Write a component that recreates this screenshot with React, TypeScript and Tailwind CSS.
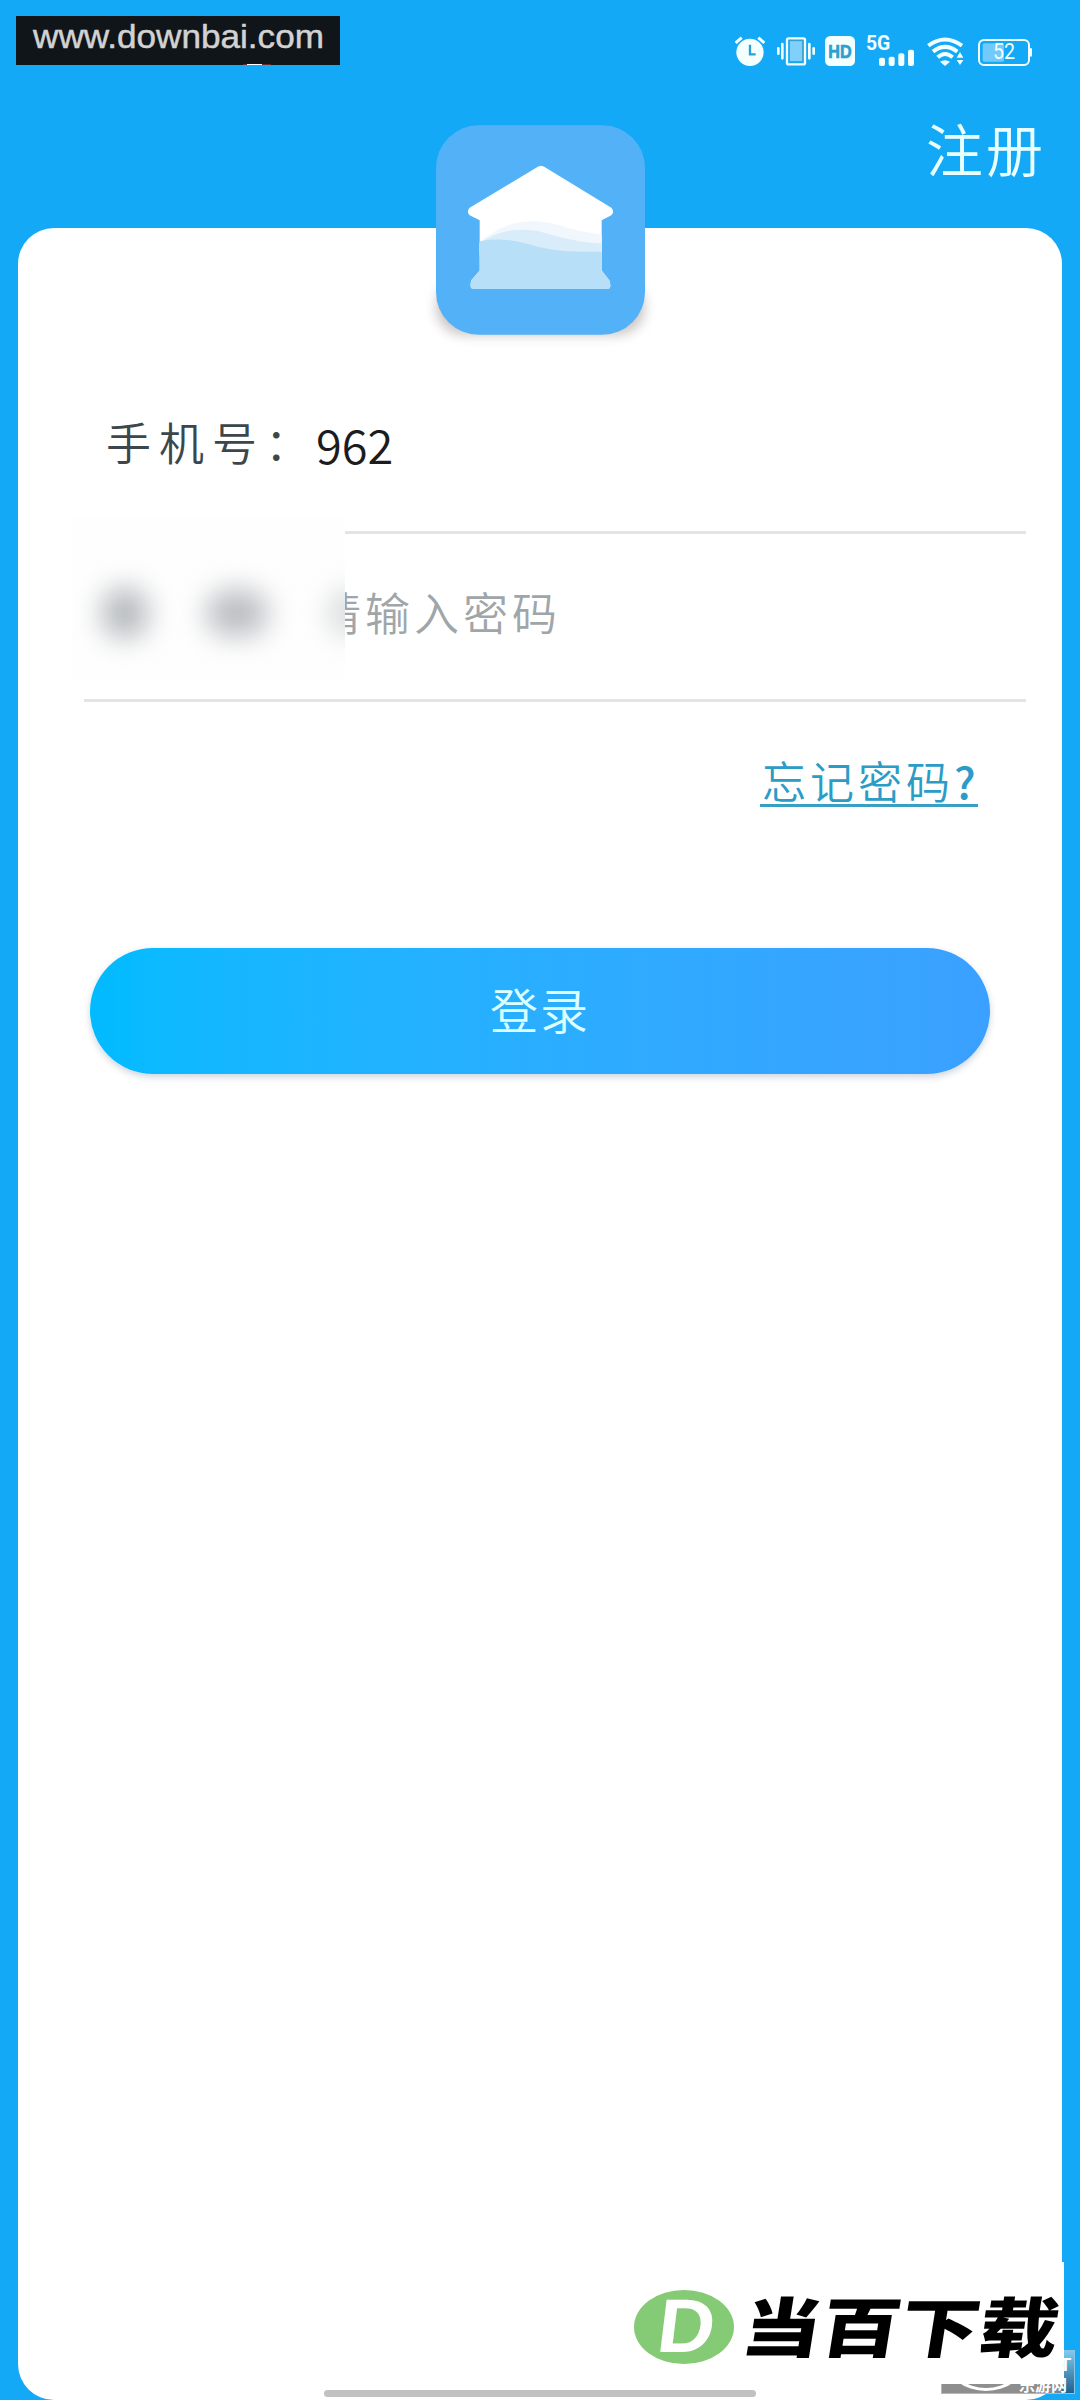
import { useState } from 'react';

function StatusIcons() {
  return (
    <div className="flex items-center h-8 text-[#f4ffff]">
      <svg className="w-[30px] h-8" viewBox="105 75 90 96" fill="currentColor">
        <circle cx="150" cy="127" r="41" />
        <path d="M107 99l18-16M193 99l-18-16" stroke="currentColor" strokeWidth="9" />
        <path d="M150 104v29h17" fill="none" stroke="#2a9fd8" strokeWidth="7" />
      </svg>
      <svg className="w-[38px] h-8 ml-3" viewBox="231 75 114 96" fill="none" stroke="currentColor">
        <rect x="261" y="85" width="54" height="78" rx="5" strokeWidth="7" />
        <rect x="268" y="92" width="40" height="63" fill="#7fd0fb" stroke="#3c9fc9" strokeWidth="3" />
        <path d="M235 115v16M247 102v43M328 102v43M341 115v16" strokeWidth="8" strokeLinecap="round" />
      </svg>
      <svg className="w-[30px] h-8 ml-2.5" viewBox="375 75 90 96">
        <rect x="375" y="78" width="90" height="90" rx="16" fill="currentColor" />
        <text x="385" y="143" textLength="70" lengthAdjust="spacingAndGlyphs" className="font-['Liberation_Sans'] font-bold text-[56px]" fill="#2a9fd0" stroke="#2a9fd0" strokeWidth="2">HD</text>
      </svg>
      <svg className="w-[49px] h-8 ml-[11px] overflow-visible" viewBox="498 75 147 96" fill="currentColor">
        <text x="498" y="121" textLength="73" lengthAdjust="spacingAndGlyphs" className="font-['Roboto','Liberation_Sans'] font-bold text-[58px]">5G</text>
        <rect x="537" y="143" width="18" height="25" rx="6" />
        <rect x="566" y="140" width="18" height="28" rx="6" />
        <rect x="595" y="130" width="18" height="38" rx="6" />
        <rect x="624" y="119" width="18" height="49" rx="6" />
      </svg>
      <svg className="w-[37px] h-8 ml-3" viewBox="681 75 111 96" fill="none" stroke="currentColor" strokeWidth="12">
        <path d="M685 107Q735 70 786 107" />
        <path d="M699 125Q735 96 772 125" />
        <path d="M713 142Q735 122 758 142" />
        <path d="M720 155Q735 146 750 155L735 168z" fill="currentColor" stroke="none" />
        <path d="M770 143l10-17 10 17zM770 150l10 15 10-15z" fill="currentColor" stroke="none" />
      </svg>
      <svg className="w-[55px] h-8 ml-3.5" viewBox="834 75 165 96" fill="none">
        <rect x="837" y="90" width="150" height="75" rx="15" stroke="currentColor" strokeWidth="6" />
        <rect x="848" y="100" width="64" height="55" rx="5" fill="#72c9fb" />
        <rect x="990" y="114" width="6" height="26" rx="3" fill="currentColor" />
        <text x="879" y="147" textLength="66" lengthAdjust="spacingAndGlyphs" className="font-['Roboto','Liberation_Sans'] font-normal text-[66px]" fill="currentColor">52</text>
      </svg>
    </div>
  );
}

function AppLogo() {
  return (
    <div className="absolute left-[436px] top-[125px] grid w-[209px] h-[210px]">
      <div className="col-start-1 row-start-1 self-end h-14 rounded-[28px] bg-[#8a7f7c]/45 blur-[6px]" />
      <svg className="relative col-start-1 row-start-1 w-full h-full" viewBox="78 75 627 629">
        <defs>
          <clipPath id="house">
            <path d="M381 201Q393 192 405 201L604 323Q615 335 604 345L575 360V511L598 540Q605 566 596 566H190Q177 566 184 540L209 511V360L179 345Q168 335 179 323z" />
          </clipPath>
        </defs>
        <rect x="78" y="75" width="627" height="629" rx="128" fill="#53b2f7" />
        <g clipPath="url(#house)">
          <rect x="160" y="180" width="460" height="400" fill="#fff" />
          <path d="M205 432C250 385 325 350 420 368C490 388 530 400 580 403V460H205z" fill="#f1f7fd" />
          <path d="M205 432C255 395 310 382 380 392C450 410 510 430 580 430V470H205z" fill="#d9ecfa" />
          <path d="M160 438C240 405 310 418 370 436C440 456 500 456 620 454V580H160z" fill="#b7dff8" />
        </g>
      </svg>
    </div>
  );
}

function Watermarks() {
  return (
    <>
      <div className="absolute left-[941px] top-[2350px] w-[134px] h-11 overflow-hidden bg-gradient-to-r from-[#8e8e8e] from-80% to-[#2a7fae] border border-[#8fc4de]">
        <div className="ml-auto w-3 h-11 bg-gradient-to-b from-[#7ccaf2] to-[#155f88]" />
        <div className="absolute left-1 -top-6 w-[80px] h-[64px] rounded-[50%] border-[3px] border-white" />
        <div className="absolute inset-0 flex flex-col items-end pt-1.5 pr-[3px] gap-[3px] font-bold text-white">
          <span className="text-[19px] leading-4 font-['Liberation_Sans']">T</span>
          <span className="pr-1 text-[16px] leading-4 whitespace-nowrap font-['Noto_Sans_CJK_SC',sans-serif]">乐游网</span>
        </div>
      </div>
      <div className="absolute left-[620px] top-[2262px] w-[444px] h-[122px] bg-white">
        <svg className="block w-[444px] h-[122px]" viewBox="0 0 444 122">
          <ellipse cx="64" cy="65" rx="50" ry="37" fill="#85ca75" />
          <text transform="translate(35 90) skewX(-7)" textLength="57" lengthAdjust="spacingAndGlyphs" className="font-['Liberation_Sans'] font-bold text-[76px]" fill="#fff">D</text>
          <text transform="translate(119 90) skewX(-9)" textLength="316" lengthAdjust="spacingAndGlyphs" className="font-['Noto_Sans_CJK_SC',sans-serif] font-black text-[65px]" fill="#000">当百下载</text>
        </svg>
      </div>
    </>
  );
}

export default function App() {
  const [phone, setPhone] = useState('962');
  const [password, setPassword] = useState('');

  return (
    <div className="relative w-[1080px] h-[2400px] overflow-hidden flex flex-col bg-[#13a9f7] font-['Noto_Sans_CJK_SC',sans-serif] font-[350]">
      <header className="h-[228px] shrink-0 flex justify-between items-start pl-4">
        <div className="mt-4 w-[324px] bg-[#10151a]">
          <svg className="block w-[324px] h-[49px]" viewBox="0 0 324 49">
            <text x="17" y="32" textLength="291" lengthAdjust="spacingAndGlyphs" className="font-['Liberation_Sans'] text-[34px] font-normal" fill="#d2d2d2" stroke="#d2d2d2" strokeWidth="0.5">www.downbai.com</text>
            <path d="M227 48.5h28" stroke="#6a2622" />
            <path d="M231 48.5h15" stroke="#fff" />
          </svg>
        </div>
        <div className="flex flex-col items-end pt-[35px]">
          <div className="pr-[47px]"><StatusIcons /></div>
          <button type="button" className="mt-12 mr-[34px] text-[57px] leading-[64px] tracking-[3px] text-[#e9ffff]">注册</button>
        </div>
      </header>

      <main className="mx-[18px] flex-1 rounded-[36px] bg-white pt-[132px]">
        <form onSubmit={e => e.preventDefault()}>
          <div className="ml-[66px] mr-9 h-[174px] flex items-center pb-[3px] border-b-[3px] border-[#e4e4e5]">
            <label htmlFor="phone" className="ml-[22px] w-[210px] pb-1 text-[45px] tracking-[8px] text-[#3b474b] whitespace-nowrap">手机号：</label>
            <input id="phone" className="w-[500px] text-[47px] text-[#1c1c1e] outline-none" value={phone} onChange={e => setPhone(e.target.value)} />
          </div>
          <div className="relative ml-[66px] mr-9 h-[168px] flex items-center pb-2.5 border-b-[3px] border-[#e4e4e5]">
            <input
              type="password"
              className="ml-[232px] w-[500px] text-[45px] tracking-[4px] outline-none placeholder:text-[#9fa6a9] placeholder:opacity-100"
              placeholder="请输入密码" value={password} onChange={e => setPassword(e.target.value)}
            />
            {/* masked label */}
            <div className="absolute -left-3 -top-[17px] w-[273px] h-[164px] overflow-hidden bg-[#fefefe] flex items-center pt-7 pl-[30px]">
              <div className="shrink-0 w-[46px] h-[52px] rounded-full bg-[#b4b8bb] blur-[14px]" />
              <div className="shrink-0 ml-[58px] w-[62px] h-[46px] rounded-full bg-[#babcc0] blur-[14px]" />
              <div className="shrink-0 ml-[60px] w-[46px] h-12 rounded-full bg-[#d9dcdd] blur-[14px]" />
            </div>
          </div>

          <div className="flex justify-end pr-[84px] pt-[47px]">
            <a href="#" className="w-[218px] h-[58px] border-b-[3px] border-[#3a9fc5] pl-0.5 text-[44px] leading-[62px] tracking-[4px] whitespace-nowrap text-[#2b9cc6]">
              忘记密码<span className="font-medium">?</span>
            </a>
          </div>

          <button
            type="submit"
            className="block mt-[141px] ml-[72px] w-[900px] h-[126px] rounded-full bg-gradient-to-r from-[#00bbff] to-[#3ba0ff] pb-1.5 text-[48px] leading-[117px] tracking-[2px] text-[#dcffff] shadow-[0_3px_7px_rgba(0,40,90,0.2)]"
          >
            登录
          </button>
        </form>
      </main>

      <AppLogo />
      <Watermarks />
      <div className="absolute left-[324px] top-[2390px] w-[432px] h-[7px] rounded-full bg-[#c1c1c1]" />
    </div>
  );
}
